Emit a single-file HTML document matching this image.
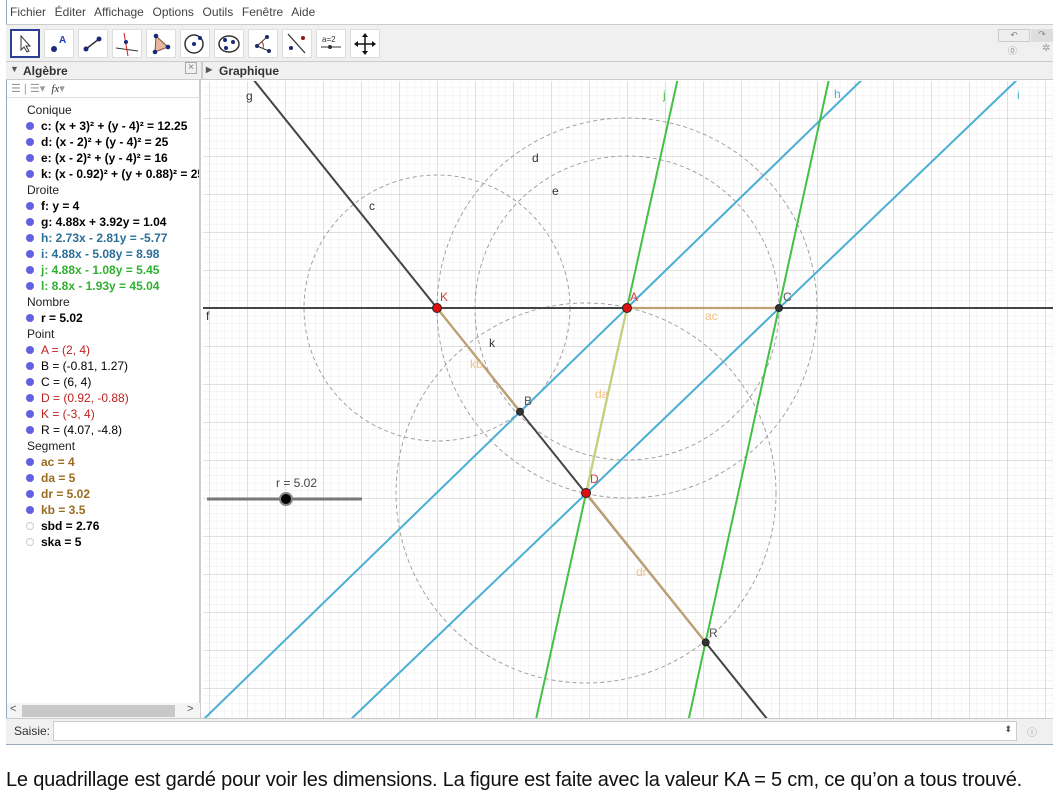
<!DOCTYPE html>
<html><head><meta charset="utf-8"><style>
*{margin:0;padding:0;box-sizing:border-box}
html,body{width:1060px;height:797px;overflow:hidden}
body{background:#fff;font-family:"Liberation Sans",sans-serif;position:relative}
.abs{position:absolute}
.menu{left:10px;top:5px;font-size:12px;color:#444;word-spacing:1px}
.tb{left:6px;top:24px;width:1047px;height:38px;background:#f0f0f0;border-top:1px solid #ccc;border-bottom:1px solid #ccc}
.btn{position:absolute;top:4px;width:30px;height:29px;background:#fff;border:1px solid #ddd}
.hdr{top:62px;height:18px;background:#f0f0f0;border-bottom:1px solid #ccc;font-size:12px;font-weight:bold;color:#333}
.alg{left:6px;top:80px;width:195px;height:640px;background:#fff;border-left:1px solid #9ab;border-right:2px solid #ccc}
.row{position:absolute;left:41px;font-size:12px;font-weight:bold;white-space:nowrap}
.cat{position:absolute;left:27px;font-size:12px;color:#222;white-space:nowrap}
.dot{position:absolute;left:26px;width:8px;height:8px;border-radius:50%;background:#6060e0}
.odot{position:absolute;left:26px;width:8px;height:8px;border-radius:50%;border:1px solid #ccc;background:#fff}
</style></head><body>
<div class="abs menu">Fichier&nbsp; Éditer&nbsp; Affichage&nbsp; Options&nbsp; Outils&nbsp; Fenêtre&nbsp; Aide</div>
<div class="abs" style="left:6px;top:0;width:1px;height:745px;background:#9ab"></div>
<div class="abs tb">
<div class="btn" style="left:4px;border:2px solid #2a3f8f"><svg width="26" height="25"><path d="M9 5 L9 19 L12 16 L15 21 L17 20 L14 15 L18 15 Z" fill="#fff" stroke="#333"/></svg></div>
<div class="btn" style="left:38px"><svg width="28" height="27"><circle cx="9" cy="19" r="3" fill="#1a2a7a"/><text x="14" y="13" font-size="10" font-weight="bold" fill="#2040c0" font-family="Liberation Sans">A</text></svg></div>
<div class="btn" style="left:72px"><svg width="28" height="27"><line x1="7" y1="19" x2="20" y2="9" stroke="#333" stroke-width="1.5"/><circle cx="7" cy="19" r="2.5" fill="#1a2a7a"/><circle cx="20" cy="9" r="2.5" fill="#1a2a7a"/></svg></div>
<div class="btn" style="left:106px"><svg width="28" height="27"><line x1="3" y1="18" x2="25" y2="21" stroke="#333"/><line x1="11" y1="3" x2="15" y2="26" stroke="#d02020"/><circle cx="13" cy="12" r="2" fill="#1a2a7a"/></svg></div>
<div class="btn" style="left:140px"><svg width="28" height="27"><path d="M9 6 L21 17 L8 22 Z" fill="#e6b8a0" stroke="#8a5030"/><circle cx="9" cy="6" r="2.3" fill="#1a2a7a"/><circle cx="21" cy="17" r="2.3" fill="#1a2a7a"/><circle cx="8" cy="22" r="2.3" fill="#1a2a7a"/></svg></div>
<div class="btn" style="left:174px"><svg width="28" height="27"><circle cx="13" cy="14" r="9" fill="none" stroke="#333" stroke-width="1.5"/><circle cx="13" cy="14" r="2" fill="#1a2a7a"/><circle cx="19" cy="8" r="2" fill="#1a2a7a"/></svg></div>
<div class="btn" style="left:208px"><svg width="28" height="27"><ellipse cx="14" cy="14" rx="10" ry="8" fill="none" stroke="#333" stroke-width="1.5"/><circle cx="10" cy="10" r="2" fill="#1a2a7a"/><circle cx="18" cy="12" r="2" fill="#1a2a7a"/><circle cx="11" cy="18" r="2" fill="#1a2a7a"/></svg></div>
<div class="btn" style="left:242px"><svg width="28" height="27"><circle cx="18" cy="7" r="2" fill="#1a2a7a"/><circle cx="8" cy="16" r="2" fill="#1a2a7a"/><circle cx="20" cy="21" r="2" fill="#1a2a7a"/><line x1="8" y1="16" x2="18" y2="7" stroke="#333"/><line x1="8" y1="16" x2="20" y2="21" stroke="#333"/><path d="M13 12 A6 6 0 0 1 14 18" fill="#f0c0c0" stroke="#c03030"/></svg></div>
<div class="btn" style="left:276px"><svg width="28" height="27"><line x1="5" y1="4" x2="22" y2="23" stroke="#333" stroke-width="1.3"/><circle cx="20" cy="8" r="2" fill="#8a1a1a"/><circle cx="8" cy="18" r="2" fill="#1a2a7a"/></svg></div>
<div class="btn" style="left:310px"><svg width="28" height="27"><text x="5" y="12" font-size="8" fill="#333" font-family="Liberation Sans">a=2</text><line x1="4" y1="17" x2="24" y2="17" stroke="#333"/><circle cx="13" cy="17" r="2" fill="#333"/></svg></div>
<div class="btn" style="left:344px"><svg width="28" height="27"><path d="M14 5 V23 M5 14 H23" stroke="#111" stroke-width="1.5"/><path d="M14 3 L11 7 H17Z M14 25 L11 21 H17Z M3 14 L7 11 V17Z M25 14 L21 11 V17Z" fill="#111"/></svg></div>
<div class="abs" style="left:992px;top:4px;width:32px;height:13px;border:1px solid #ccc;background:#eee;font-size:9px;text-align:center;color:#888;line-height:11px">↶</div>
<div class="abs" style="left:1025px;top:4px;width:22px;height:13px;background:#ddd;font-size:9px;text-align:center;color:#888;line-height:11px">↷</div>
<div class="abs" style="left:1002px;top:19px;font-size:9px;color:#999">⓪</div>
<div class="abs" style="left:1036px;top:18px;font-size:10px;color:#999">✲</div>
</div>
<div class="abs hdr" style="left:6px;width:195px"><span style="position:absolute;left:4px;top:2px;font-size:9px;color:#555">▼</span><span style="position:absolute;left:17px;top:2px">Algèbre</span><span style="position:absolute;right:4px;top:0;font-weight:normal;color:#777;border:1px solid #aaa;width:12px;height:12px;font-size:10px;line-height:10px;text-align:center">×</span></div>
<div class="abs hdr" style="left:201px;width:852px;border-left:2px solid #ccc"><span style="position:absolute;left:3px;top:3px;font-size:8px;color:#555">▶</span><span style="position:absolute;left:16px;top:2px">Graphique</span></div>
<div class="abs alg">
<div class="abs" style="left:0;top:0;width:193px;height:18px;border-bottom:1px solid #ddd;font-size:11px;color:#999;padding:2px 4px">☰ | ☰▾ &nbsp;<i style="font-family:'Liberation Serif';color:#333">fx</i>▾</div>
</div>
<div class="abs" style="left:0;top:0">
<div class="cat" style="top:103px">Conique</div>
<div class="dot" style="top:122px"></div><div class="row" style="top:119px">c: (x + 3)² + (y - 4)² = 12.25</div>
<div class="dot" style="top:138px"></div><div class="row" style="top:135px">d: (x - 2)² + (y - 4)² = 25</div>
<div class="dot" style="top:154px"></div><div class="row" style="top:151px">e: (x - 2)² + (y - 4)² = 16</div>
<div class="dot" style="top:170px"></div><div class="row" style="top:167px;width:158px;overflow:hidden">k: (x - 0.92)² + (y + 0.88)² = 25</div>
<div class="cat" style="top:183px">Droite</div>
<div class="dot" style="top:202px"></div><div class="row" style="top:199px">f: y = 4</div>
<div class="dot" style="top:218px"></div><div class="row" style="top:215px">g: 4.88x + 3.92y = 1.04</div>
<div class="dot" style="top:234px"></div><div class="row" style="top:231px;color:#2a6f9a">h: 2.73x - 2.81y = -5.77</div>
<div class="dot" style="top:250px"></div><div class="row" style="top:247px;color:#2a6f9a">i: 4.88x - 5.08y = 8.98</div>
<div class="dot" style="top:266px"></div><div class="row" style="top:263px;color:#30b030">j: 4.88x - 1.08y = 5.45</div>
<div class="dot" style="top:282px"></div><div class="row" style="top:279px;color:#30b030">l: 8.8x - 1.93y = 45.04</div>
<div class="cat" style="top:295px">Nombre</div>
<div class="dot" style="top:314px"></div><div class="row" style="top:311px">r = 5.02</div>
<div class="cat" style="top:327px">Point</div>
<div class="dot" style="top:346px"></div><div class="row" style="top:343px;color:#c02020;font-weight:normal">A = (2, 4)</div>
<div class="dot" style="top:362px"></div><div class="row" style="top:359px;font-weight:normal">B = (-0.81, 1.27)</div>
<div class="dot" style="top:378px"></div><div class="row" style="top:375px;font-weight:normal">C = (6, 4)</div>
<div class="dot" style="top:394px"></div><div class="row" style="top:391px;color:#c02020;font-weight:normal">D = (0.92, -0.88)</div>
<div class="dot" style="top:410px"></div><div class="row" style="top:407px;color:#c02020;font-weight:normal">K = (-3, 4)</div>
<div class="dot" style="top:426px"></div><div class="row" style="top:423px;font-weight:normal">R = (4.07, -4.8)</div>
<div class="cat" style="top:439px">Segment</div>
<div class="dot" style="top:458px"></div><div class="row" style="top:455px;color:#9a6a20">ac = 4</div>
<div class="dot" style="top:474px"></div><div class="row" style="top:471px;color:#9a6a20">da = 5</div>
<div class="dot" style="top:490px"></div><div class="row" style="top:487px;color:#9a6a20">dr = 5.02</div>
<div class="dot" style="top:506px"></div><div class="row" style="top:503px;color:#9a6a20">kb = 3.5</div>
<div class="odot" style="top:522px"></div><div class="row" style="top:519px">sbd = 2.76</div>
<div class="odot" style="top:538px"></div><div class="row" style="top:535px">ska = 5</div>
</div>
<div class="abs" style="left:7px;top:703px;width:193px;height:16px;background:#f4f4f4"><div style="position:absolute;left:15px;top:2px;width:153px;height:12px;background:#c8c8c8"></div><span style="position:absolute;left:3px;top:0;font-size:11px;color:#555">&lt;</span><span style="position:absolute;left:180px;top:0;font-size:11px;color:#555">&gt;</span></div>
<svg class="abs" style="left:0;top:0" width="1060" height="797">
<defs>
<pattern id="mn" x="19" y="4" width="7.6" height="7.6" patternUnits="userSpaceOnUse"><path d="M0 0 V7.6 M0 0 H7.6" stroke="#ebebeb" stroke-width="1" fill="none"/></pattern>
<pattern id="mj" x="19" y="4" width="38" height="38" patternUnits="userSpaceOnUse"><path d="M0 0 V38 M0 0 H38" stroke="#cdcdcd" stroke-width="1.2" fill="none"/></pattern>
<clipPath id="gc"><rect x="203" y="81" width="850" height="637"/></clipPath>
</defs>
<g clip-path="url(#gc)">
<rect x="203" y="81" width="850" height="637" fill="#fff"/>
<rect x="203" y="81" width="850" height="637" fill="url(#mn)"/>
<rect x="203" y="81" width="850" height="637" fill="url(#mj)"/>
<g fill="none" stroke="#9a9a9a" stroke-dasharray="4,3" stroke-width="0.9">
<circle cx="437" cy="308" r="133"/><circle cx="627" cy="308" r="190"/><circle cx="627" cy="308" r="152"/><circle cx="586" cy="493" r="190"/>
</g>
<line x1="201" y1="308" x2="1060" y2="308" stroke="#444" stroke-width="2"/>
<line x1="253.8" y1="80" x2="864.3" y2="840" stroke="#444" stroke-width="2"/>
<g stroke="#4aaed4" stroke-width="2"><line x1="171" y1="751" x2="1121" y2="-172"/><line x1="171" y1="892" x2="1121" y2="-20"/></g>
<g stroke="#44c044" stroke-width="2"><line x1="677.5" y1="80" x2="509.3" y2="840"/><line x1="828.8" y1="80" x2="662.2" y2="840"/></g>
<g stroke="#c0a070" stroke-width="2.2"><line x1="627" y1="308" x2="779" y2="308"/><line x1="586" y1="493" x2="705.7" y2="642.4"/><line x1="437" y1="308" x2="520" y2="411.7"/></g>
<line x1="586" y1="493" x2="627" y2="308" stroke="#c8d080" stroke-width="2.2"/>
<g font-family="Liberation Sans" font-size="12" fill="#333">
<text x="246" y="100">g</text><text x="369" y="210">c</text><text x="532" y="162">d</text><text x="552" y="195">e</text><text x="489" y="347">k</text><text x="206" y="320">f</text>
<text x="834" y="98" fill="#4aaed4">h</text><text x="1017" y="99" fill="#4aaed4">i</text><text x="663" y="99" fill="#44c044">j</text>
<text x="705" y="320" fill="#f0c080">ac</text><text x="595" y="398" fill="#f0c080">da</text><text x="636" y="576" fill="#f0c080">dr</text><text x="470" y="368" fill="#f0c080">kb</text>
<text x="440" y="301" fill="#d04040">K</text><text x="630" y="301" fill="#d04040">A</text><text x="590" y="483" fill="#d04040">D</text>
<text x="783" y="301" fill="#555">C</text><text x="524" y="405" fill="#555">B</text><text x="709" y="637" fill="#555">R</text>
<text x="276" y="487" fill="#444">r = 5.02</text>
</g>
<line x1="207" y1="499" x2="362" y2="499" stroke="#777" stroke-width="3"/>
<circle cx="286" cy="499" r="6" fill="#000" stroke="#888" stroke-width="2"/>
<g stroke="#222" stroke-width="1"><circle cx="437" cy="308" r="4.5" fill="#e01010"/><circle cx="627" cy="308" r="4.5" fill="#e01010"/><circle cx="586" cy="493" r="4.5" fill="#e01010"/><circle cx="779" cy="308" r="3.5" fill="#333"/><circle cx="520" cy="411.7" r="3.5" fill="#333"/><circle cx="705.7" cy="642.4" r="3.5" fill="#333"/></g>
</g>
</svg>
<div class="abs" style="left:6px;top:718px;width:1047px;height:27px;background:#f0f0f0;border-top:1px solid #ccc;border-bottom:1px solid #9ab"></div>
<div class="abs" style="left:14px;top:724px;font-size:12px;color:#333">Saisie:</div>
<div class="abs" style="left:53px;top:721px;width:964px;height:20px;background:#fff;border:1px solid #ccc"><span style="position:absolute;right:4px;top:2px;font-size:9px;color:#555">⬍</span></div>
<div class="abs" style="left:1027px;top:724px;font-size:10px;color:#999">ⓘ</div>
<div class="abs" style="left:6px;top:768px;font-size:20px;line-height:24px;color:#111;white-space:nowrap;letter-spacing:-0.2px">Le quadrillage est gardé pour voir les dimensions. La figure est faite avec la valeur KA = 5 cm, ce qu’on a tous trouvé.</div>
</body></html>
